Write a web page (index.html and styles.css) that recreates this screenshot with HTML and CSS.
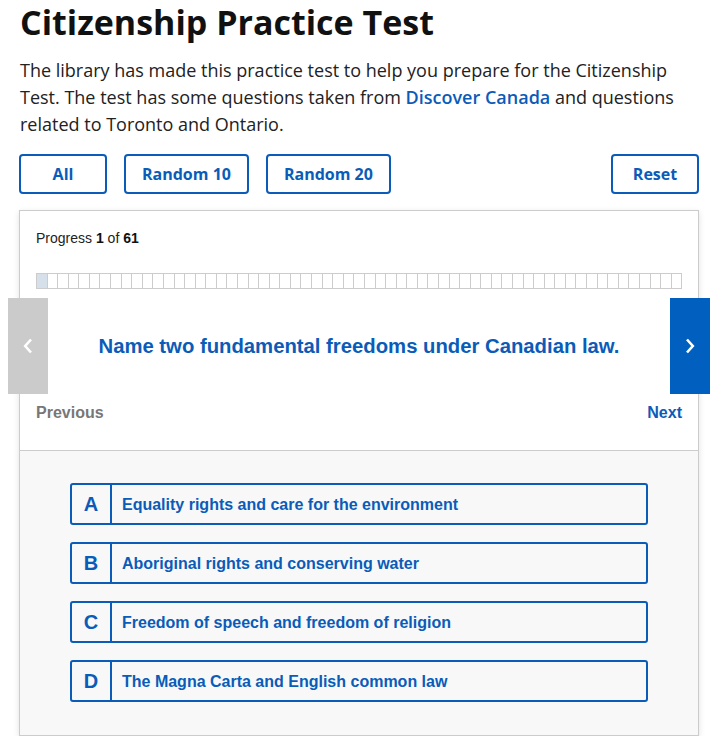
FILE: index.html
```html
<!doctype html>
<html lang="en">
<head>
    <meta charset="UTF-8">
    <meta name="viewport" content="width=device-width, initial-scale=1.0">
    <title>Citizenship Practice Test</title>
    <link rel="stylesheet" href="styles.css">
</head>
<body>
<div class="page">
    <h1 class="title">Citizenship Practice Test</h1>
    <p class="intro">The library has made this practice test to help you prepare for the Citizenship Test. The test has some questions taken from <a href="javascript:;">Discover Canada</a> and questions related to Toronto and Ontario.</p>

    <div class="toolbar">
        <a class="btn btn-all" href="javascript:;">All</a>
        <a class="btn" href="javascript:;">Random 10</a>
        <a class="btn" href="javascript:;">Random 20</a>
        <a class="btn btn-reset" href="javascript:;">Reset</a>
    </div>

    <div class="quiz">
        <div class="quiz-top">
            <p class="progress-text">Progress <b>1</b> of <b>61</b></p>
            <div class="progress-bar"></div>
            <div class="slide">
                <a class="arrow arrow-prev" href="javascript:;">
                    <svg width="12" height="18" viewBox="0 0 12 18"><path d="M9 2.5 L3.2 9 L9 15.5" fill="none" stroke="#fff" stroke-width="2.6"/></svg>
                </a>
                <h2 class="question">Name two fundamental freedoms under Canadian law.</h2>
                <a class="arrow arrow-next" href="javascript:;">
                    <svg width="12" height="18" viewBox="0 0 12 18"><path d="M3 2.5 L8.8 9 L3 15.5" fill="none" stroke="#fff" stroke-width="2.6"/></svg>
                </a>
            </div>
            <div class="pager">
                <a class="pager-prev" href="javascript:;">Previous</a>
                <a class="pager-next" href="javascript:;">Next</a>
            </div>
        </div>
        <div class="quiz-answers">
            <a class="answer" href="javascript:;"><span class="letter">A</span><span class="answer-text">Equality rights and care for the environment</span></a>
            <a class="answer" href="javascript:;"><span class="letter">B</span><span class="answer-text">Aboriginal rights and conserving water</span></a>
            <a class="answer" href="javascript:;"><span class="letter">C</span><span class="answer-text">Freedom of speech and freedom of religion</span></a>
            <a class="answer" href="javascript:;"><span class="letter">D</span><span class="answer-text">The Magna Carta and English common law</span></a>
        </div>
    </div>
</div>

<script>
    let oBar = document.querySelector(".progress-bar");
    for (let i = 0; i < 61; i++) {
        let cell = document.createElement("span");
        if (i === 0) cell.classList.add("done");
        oBar.appendChild(cell);
    }
</script>
</body>
</html>
```

FILE: styles.css
```css
* {
    margin: 0;
    padding: 0;
    box-sizing: border-box;
}

a {
    text-decoration: none;
}

body {
    background: #fff;
    color: #222;
    font-family: "Open Sans", "Liberation Sans", sans-serif;
}

.page {
    padding: 0 23px 0 19px;
}

.title {
    font-size: 34px;
    font-weight: 700;
    line-height: 44px;
    color: #111;
    padding-left: 1px;
}

.intro {
    margin-top: 13px;
    padding-left: 1px;
    font-size: 18px;
    line-height: 27px;
    color: #222;
}

.intro a {
    color: #0a5cb8;
    font-weight: 600;
}

.toolbar {
    display: flex;
    gap: 17px;
    margin-top: 16px;
}

.btn {
    display: flex;
    align-items: center;
    justify-content: center;
    height: 40px;
    padding: 0 16px;
    border: 2px solid #0a5cb8;
    border-radius: 4px;
    color: #0a5cb8;
    font-size: 16px;
    font-weight: 700;
}

.btn-all {
    width: 88px;
}

.btn-reset {
    width: 88px;
    margin-left: auto;
}

.quiz {
    margin-top: 16px;
    border: 1px solid #ccc;
    box-shadow: 0 2px 6px rgba(0, 0, 0, 0.12);
    font-family: "Liberation Sans", Arial, sans-serif;
}

.quiz-top {
    padding: 19px 16px 0;
    background: #fff;
}

.progress-text {
    font-size: 14px;
    line-height: 16px;
    color: #222;
}

.progress-text b {
    color: #111;
}

.progress-bar {
    display: flex;
    height: 16px;
    margin-top: 27px;
    border: 1px solid #ccc;
    border-right: none;
}

.progress-bar span {
    flex: 1;
    border-right: 1px solid #ccc;
}

.progress-bar span.done {
    background: #d6e0ea;
}

.slide {
    position: relative;
    display: flex;
    align-items: center;
    justify-content: center;
    height: 96px;
    margin-top: 9px;
}

.question {
    font-size: 20.3px;
    font-weight: 700;
    color: #0a5cb8;
}

.arrow {
    position: absolute;
    top: 0;
    bottom: 0;
    width: 40px;
    display: flex;
    align-items: center;
    justify-content: center;
}

.arrow-prev {
    left: -28px;
    background: #cbcbcb;
}

.arrow-next {
    right: -28px;
    background: #005fbf;
}

.pager {
    display: flex;
    justify-content: space-between;
    height: 56px;
    padding-top: 10px;
    font-size: 16px;
    font-weight: 700;
    line-height: 18px;
}

.pager-prev {
    color: #777;
}

.pager-next {
    color: #0a5cb8;
}

.quiz-answers {
    display: flex;
    flex-direction: column;
    gap: 17px;
    padding: 32px 50px 33px;
    border-top: 1px solid #ccc;
    background: #f8f8f8;
}

.answer {
    display: flex;
    align-items: center;
    height: 42px;
    border: 2px solid #0a5cb8;
    border-radius: 3px;
    color: #0a5cb8;
}

.letter {
    display: flex;
    align-items: center;
    justify-content: center;
    width: 40px;
    height: 100%;
    border-right: 2px solid #0a5cb8;
    font-size: 20px;
    font-weight: 700;
}

.answer-text {
    padding: 1px 0 0 10px;
    font-size: 16px;
    font-weight: 700;
}
```
